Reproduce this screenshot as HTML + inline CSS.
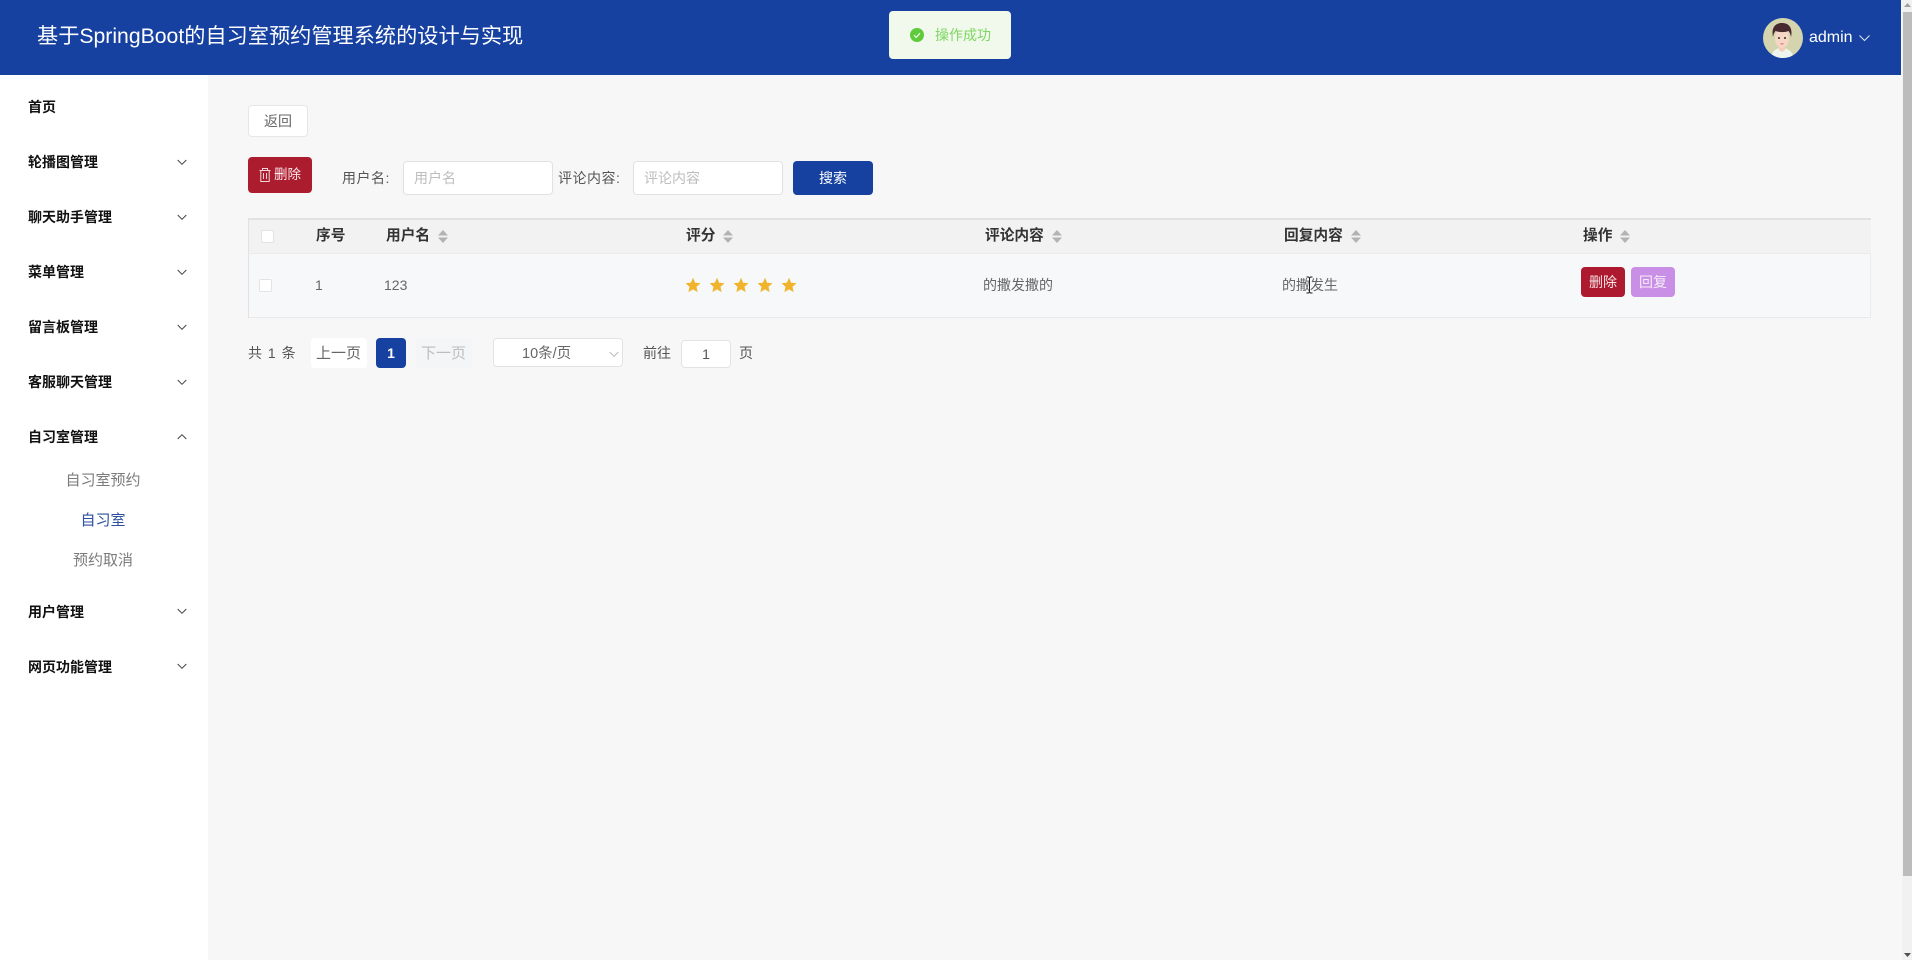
<!DOCTYPE html>
<html lang="zh-CN">
<head>
<meta charset="utf-8">
<title>自习室预约管理系统</title>
<style>
*{box-sizing:border-box}
html,body{margin:0;padding:0;width:1912px;height:960px;overflow:hidden;background:#f7f7f7}
body{position:relative;font-family:"Liberation Sans","Noto Sans CJK SC",sans-serif;font-size:14px;color:#666}
.a{position:absolute;white-space:nowrap}
.t{position:absolute;white-space:nowrap;height:24px;line-height:24px}
.hd{left:0;top:0;width:1901px;height:75px;background:#1641a0}
.sb{left:0;top:75px;width:208px;height:885px;background:#fff}
.m{font-weight:700;color:#111;left:28px;font-size:14px}
.s{font-size:15px;color:#7b7b7b;left:0;width:206px;text-align:center}
.box{background:#fff;border:1px solid #dfe1e5;border-radius:4px}
.cb{position:absolute;width:13px;height:13px;background:#fff;border:1px solid #e3e3e3;border-radius:2px}
.th{font-weight:700;color:#333;font-size:14.700px}
.btn{position:absolute;border-radius:4px;color:#fff;text-align:center}
svg{position:absolute;display:block}
</style>
</head>
<body>
<div class="a hd"></div>
<div class="t" style="left:37px;top:23px;height:28px;line-height:28px;font-size:21.200px;color:#fff">基于SpringBoot的自习室预约管理系统的设计与实现</div>

<!-- toast -->
<div class="a" style="left:889px;top:11px;width:122px;height:48px;background:#f0f9eb;border-radius:4px"></div>
<svg style="left:910px;top:28px" width="14" height="14" viewBox="0 0 14 14"><circle cx="7" cy="7" r="7" fill="#5fcb3c"/><path d="M4 7.200l2.200 2.200L10 5.200" fill="none" stroke="#f0f9eb" stroke-width="1.200"/></svg>
<div class="t" style="left:935px;top:23px;color:#80d663;font-size:14px">操作成功</div>

<!-- user -->
<svg style="left:1763px;top:18px" width="40" height="40" viewBox="0 0 40 40">
<defs><clipPath id="c"><circle cx="20" cy="20" r="20"/></clipPath></defs>
<g clip-path="url(#c)">
<rect width="40" height="40" fill="#d4d5ae"/>
<path d="M8 40c1-7 5-10 11-10s10 3 12 10z" fill="#eef5ee"/>
<path d="M15.500 27h7l-.5 5-3 2-3-2z" fill="#f3cdb8"/>
<ellipse cx="19" cy="20" rx="7" ry="10" fill="#f6d6c6"/>
<path d="M10 19c-2-9 2-14 9-14s11 5 9 14c-.5-3-1.500-5-2.500-6-3.500 1.500-9 1.500-13 0-1 1-2 3-2.500 6z" fill="#47292f"/>
<circle cx="16" cy="20" r="1" fill="#332"/><circle cx="22" cy="20" r="1" fill="#332"/>
<path d="M17.500 25.500q1.500 1 3 0" stroke="#d66" stroke-width=".9" fill="#e88"/>
</g></svg>
<div class="t" style="left:1809px;top:26px;font-size:16px;color:#fff">admin</div>
<svg style="left:1859px;top:34px" width="11" height="8" viewBox="0 0 11 8"><path d="M.5 1.500l5 5 5-5" fill="none" stroke="#dfe6f5" stroke-width="1"/></svg>

<!-- sidebar -->
<div class="a sb"></div>
<div class="t m" style="top:95px">首页</div>
<div class="t m" style="top:150px">轮播图管理</div>
<div class="t m" style="top:205px">聊天助手管理</div>
<div class="t m" style="top:260px">菜单管理</div>
<div class="t m" style="top:315px">留言板管理</div>
<div class="t m" style="top:370px">客服聊天管理</div>
<div class="t m" style="top:425px">自习室管理</div>
<div class="t s" style="top:468.500px">自习室预约</div>
<div class="t s" style="top:508.500px;color:#2c509f">自习室</div>
<div class="t s" style="top:548.500px">预约取消</div>
<div class="t m" style="top:600px">用户管理</div>
<div class="t m" style="top:655px">网页功能管理</div>
<svg style="left:177px;top:159px" width="10" height="7" viewBox="0 0 10 7"><path d="M.7 1l4.300 4.300L9.300 1" fill="none" stroke="#444" stroke-width="1"/></svg>
<svg style="left:177px;top:214px" width="10" height="7" viewBox="0 0 10 7"><path d="M.7 1l4.300 4.300L9.300 1" fill="none" stroke="#444" stroke-width="1"/></svg>
<svg style="left:177px;top:269px" width="10" height="7" viewBox="0 0 10 7"><path d="M.7 1l4.300 4.300L9.300 1" fill="none" stroke="#444" stroke-width="1"/></svg>
<svg style="left:177px;top:324px" width="10" height="7" viewBox="0 0 10 7"><path d="M.7 1l4.300 4.300L9.300 1" fill="none" stroke="#444" stroke-width="1"/></svg>
<svg style="left:177px;top:379px" width="10" height="7" viewBox="0 0 10 7"><path d="M.7 1l4.300 4.300L9.300 1" fill="none" stroke="#444" stroke-width="1"/></svg>
<svg style="left:177px;top:433px" width="10" height="7" viewBox="0 0 10 7"><path d="M.7 6l4.300-4.300L9.300 6" fill="none" stroke="#444" stroke-width="1"/></svg>
<svg style="left:177px;top:608px" width="10" height="7" viewBox="0 0 10 7"><path d="M.7 1l4.300 4.300L9.300 1" fill="none" stroke="#444" stroke-width="1"/></svg>
<svg style="left:177px;top:663px" width="10" height="7" viewBox="0 0 10 7"><path d="M.7 1l4.300 4.300L9.300 1" fill="none" stroke="#444" stroke-width="1"/></svg>

<!-- toolbar -->
<div class="a box" style="left:248px;top:105px;width:60px;height:32px;border-color:#e6e6e6"></div>
<div class="t" style="left:264px;top:109px;color:#666">返回</div>
<div class="btn" style="left:248px;top:157px;width:64px;height:36px;background:#ab1c2f"></div>
<svg style="left:259px;top:168px" width="12" height="14" viewBox="0 0 12 14"><path d="M.5 2.500h11M3.500 2.500v-2h5v2M1.800 2.500v11h8.400v-11M4.500 5v6M7.500 5v6" fill="none" stroke="#f3d5da" stroke-width="1"/></svg>
<div class="t" style="left:274px;top:163px;color:#fbeaec;font-size:13.500px">删除</div>
<div class="t" style="left:342px;top:166px;color:#555;letter-spacing:.5px">用户名:</div>
<div class="a box" style="left:403px;top:161px;width:150px;height:34px"></div>
<div class="t" style="left:414px;top:166px;color:#bdbdbd">用户名</div>
<div class="t" style="left:558px;top:166px;color:#555;letter-spacing:.5px">评论内容:</div>
<div class="a box" style="left:633px;top:161px;width:150px;height:34px"></div>
<div class="t" style="left:644px;top:166px;color:#bdbdbd">评论内容</div>
<div class="btn" style="left:793px;top:161px;width:80px;height:34px;background:#1641a0;line-height:34px;font-size:14px">搜索</div>

<!-- table -->
<div class="a" style="left:248px;top:218px;width:1623px;height:35px;background:#f2f2f2;border-top:2px solid #e2e2e2;border-left:1px solid #e2e2e2"></div>
<div class="a" style="left:248px;top:253px;width:1623px;height:65px;background:#f7f8fa;border-top:1px solid #ececec;border-left:1px solid #e2e2e2;border-right:1px solid #ececec;border-bottom:1px solid #e9e9e9"></div>
<div class="cb" style="left:261px;top:230px"></div>
<div class="t th" style="left:316px;top:224px">序号</div>
<div class="t th" style="left:386px;top:224px">用户名</div>
<div class="t th" style="left:686px;top:224px">评分</div>
<div class="t th" style="left:985px;top:224px">评论内容</div>
<div class="t th" style="left:1284px;top:224px">回复内容</div>
<div class="t th" style="left:1583px;top:224px">操作</div>
<svg style="left:438px;top:230px" width="10" height="13" viewBox="0 0 10 13"><path d="M5 0l5 5.500H0zM5 13l5-5.500H0z" fill="#b3b3b3"/></svg>
<svg style="left:723px;top:230px" width="10" height="13" viewBox="0 0 10 13"><path d="M5 0l5 5.500H0zM5 13l5-5.500H0z" fill="#b3b3b3"/></svg>
<svg style="left:1052px;top:230px" width="10" height="13" viewBox="0 0 10 13"><path d="M5 0l5 5.500H0zM5 13l5-5.500H0z" fill="#b3b3b3"/></svg>
<svg style="left:1351px;top:230px" width="10" height="13" viewBox="0 0 10 13"><path d="M5 0l5 5.500H0zM5 13l5-5.500H0z" fill="#b3b3b3"/></svg>
<svg style="left:1620px;top:230px" width="10" height="13" viewBox="0 0 10 13"><path d="M5 0l5 5.500H0zM5 13l5-5.500H0z" fill="#b3b3b3"/></svg>

<div class="cb" style="left:259px;top:279px"></div>
<div class="t" style="left:315px;top:273px">1</div>
<div class="t" style="left:384px;top:273px">123</div>
<svg style="left:685px;top:277px" width="112" height="16" viewBox="0 0 112 16" fill="#f0b42c">
<path d="M8 .8l2.200 4.900 5.300.6-4 3.500 1.100 5.300L8 12.400l-4.600 2.700 1.100-5.300-4-3.500 5.300-.6z"/>
<path transform="translate(24)" d="M8 .8l2.200 4.900 5.300.6-4 3.500 1.100 5.300L8 12.400l-4.600 2.700 1.100-5.300-4-3.500 5.300-.6z"/>
<path transform="translate(48)" d="M8 .8l2.200 4.900 5.300.6-4 3.500 1.100 5.300L8 12.400l-4.600 2.700 1.100-5.300-4-3.500 5.300-.6z"/>
<path transform="translate(72)" d="M8 .8l2.200 4.900 5.300.6-4 3.500 1.100 5.300L8 12.400l-4.600 2.700 1.100-5.300-4-3.500 5.300-.6z"/>
<path transform="translate(96)" d="M8 .8l2.200 4.900 5.300.6-4 3.500 1.100 5.300L8 12.400l-4.600 2.700 1.100-5.300-4-3.500 5.300-.6z"/>
</svg>
<div class="t" style="left:983px;top:273px;color:#666">的撒发撒的</div>
<div class="t" style="left:1282px;top:273px;color:#666">的撒发生</div>
<svg style="left:1305px;top:276px" width="9" height="18" viewBox="0 0 9 18"><path d="M1.500 1h2l1 1 1-1h2M1.500 17h2l1-1 1 1h2M4.500 2v14" fill="none" stroke="#222" stroke-width="1"/></svg>
<div class="btn" style="left:1581px;top:267px;width:44px;height:30px;background:#ad1a30;line-height:30px;font-size:14px;color:#f8e4e6">删除</div>
<div class="btn" style="left:1631px;top:267px;width:44px;height:30px;background:#c98fe6;line-height:30px;font-size:14px;color:#f7ecfb">回复</div>

<!-- pagination -->
<div class="t" style="left:248px;top:341px;color:#555;word-spacing:2px">共 1 条</div>
<div class="a" style="left:311px;top:338px;width:56px;height:30px;background:#fff;border-radius:3px"></div>
<div class="t" style="left:316px;top:341.500px;color:#666;font-size:15px">上一页</div>
<div class="btn" style="left:376px;top:338px;width:30px;height:30px;background:#1641a0;line-height:30px;font-weight:700;font-size:14px">1</div>
<div class="a" style="left:416px;top:338px;width:56px;height:30px;background:#f3f5f7;border-radius:3px"></div>
<div class="t" style="left:421px;top:341.500px;color:#bdbdbd;font-size:15px">下一页</div>
<div class="a box" style="left:493px;top:338px;width:130px;height:29px;border-color:#e2e3e6"></div>
<div class="t" style="left:522px;top:342px;color:#666;font-size:14.500px">10条/页</div>
<svg style="left:609px;top:351px" width="10" height="7" viewBox="0 0 10 7"><path d="M.7 1l4.300 4.300L9.300 1" fill="none" stroke="#bbb" stroke-width="1"/></svg>
<div class="t" style="left:643px;top:341px;color:#555">前往</div>
<div class="a box" style="left:681px;top:340px;width:50px;height:28px;border-color:#e2e3e6"></div>
<div class="t" style="left:681px;top:342px;width:50px;text-align:center;color:#555">1</div>
<div class="t" style="left:739px;top:341px;color:#555">页</div>

<!-- scrollbar -->
<div class="a" style="left:1902px;top:0;width:10px;height:960px;background:#f1f1f1"></div>
<div class="a" style="left:1903px;top:12px;width:9px;height:864px;background:#bcbcbc"></div>
<svg style="left:1903px;top:2px" width="9" height="6" viewBox="0 0 9 6"><path d="M4.500 1L8 5H1z" fill="#a0a0a0"/></svg>
<svg style="left:1903px;top:952px" width="9" height="6" viewBox="0 0 9 6"><path d="M4.500 5L8 1H1z" fill="#505050"/></svg>
</body>
</html>
